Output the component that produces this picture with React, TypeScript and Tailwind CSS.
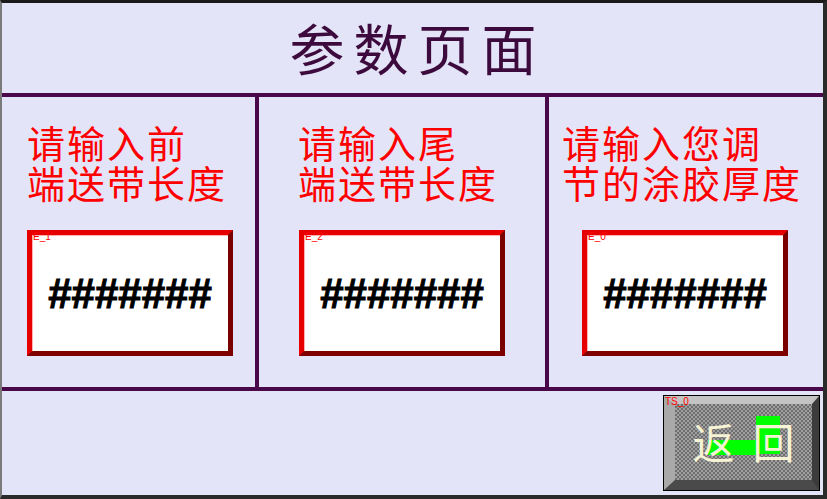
import React from "react";

const cjk = { fontFamily: '"Noto Sans CJK SC", "Noto Sans", sans-serif' };

function InputBox({ tag }: { tag: string }) {
  return (
    <div className="relative w-[206px] h-[126px] border-[5px] border-t-[#e60000] border-l-[#e60000] border-r-[#7a0000] border-b-[#800000] bg-white flex items-center justify-center shadow-[inset_1px_1px_0_#ffb0b0]">
      <span
        className="absolute left-[1px] top-[-3px] text-[10px] leading-none text-[#ff0000]"
        style={{ fontFamily: '"Liberation Sans", Arial, sans-serif' }}
      >
        {tag}
      </span>
      <span
        className="text-[42px] font-bold leading-none text-black mt-[2px] [-webkit-text-stroke:1px_black]"
        style={{ fontFamily: '"Liberation Sans", Arial, sans-serif' }}
      >
        #######
      </span>
    </div>
  );
}

function Label({ lines }: { lines: string[] }) {
  return (
    <div
      className="text-[38px] leading-[40px] tracking-[2px] text-[#ff0000] font-normal"
      style={cjk}
    >
      {lines.map((l) => (
        <div key={l} className="whitespace-nowrap">
          {l}
        </div>
      ))}
    </div>
  );
}

export default function App() {
  return (
    <div className="w-[827px] h-[499px] bg-[#e4e4f8] border-t-[3px] border-t-[#1a1a1a] border-l-[2px] border-l-[#7a7a7a] border-r-[4px] border-r-[#2a2a2a] border-b-[4px] border-b-[#2a2a2a] flex flex-col overflow-hidden">
      {/* header */}
      <div className="h-[90px] flex items-center justify-center">
        <span
          className="text-[55px] leading-none tracking-[9px] text-[#3c0a3c] font-normal ml-[10px] mb-[4px]"
          style={cjk}
        >
          参数页面
        </span>
      </div>
      <div className="h-[4px] bg-[#48084a]" />
      {/* middle */}
      <div className="h-[290px] flex">
        <div className="w-[253px] flex flex-col pl-[25px] pt-[25px]">
          <Label lines={["请输入前", "端送带长度"]} />
          <div className="mt-[28px]">
            <InputBox tag="E_1" />
          </div>
        </div>
        <div className="w-[4px] bg-[#48084a]" />
        <div className="w-[286px] flex flex-col pl-[40px] pt-[25px]">
          <div className="-ml-[1px]">
            <Label lines={["请输入尾", "端送带长度"]} />
          </div>
          <div className="mt-[28px]">
            <InputBox tag="E_2" />
          </div>
        </div>
        <div className="w-[4px] bg-[#48084a]" />
        <div className="flex-1 flex flex-col pl-[13px] pt-[25px]">
          <Label lines={["请输入您调", "节的涂胶厚度"]} />
          <div className="mt-[28px] pl-[20px]">
            <InputBox tag="E_0" />
          </div>
        </div>
      </div>
      <div className="h-[4px] bg-[#48084a]" />
      {/* bottom */}
      <div className="flex-1 flex items-center justify-end pr-[3px]">
        <div className="relative w-[157px] h-[96px] border border-black">
          <div className="w-full h-full border-t-[8px] border-t-[#c4c4c4] border-l-[11px] border-l-[#a9a9a9] border-r-[7px] border-r-[#3c3c3c] border-b-[10px] border-b-[#4a4a4a] bg-[#8c8c8c] bg-[repeating-conic-gradient(#6e6e6e_0%_25%,#a0a0a0_0%_50%)] bg-[length:4px_4px] relative">
            <div className="absolute left-[81px] top-[12px] w-[24px] h-[38px] bg-[#00ff00]" />
            <div className="absolute left-[33px] top-[36px] w-[50px] h-[15px] bg-[#00ff00]" />
            <div className="absolute inset-0 flex items-center justify-center gap-[18px] pb-[2px]">
              <span
                className="text-[42px] leading-none text-[#f6f2d4] font-normal"
                style={cjk}
              >
                返
              </span>
              <span
                className="text-[42px] leading-none text-[#f6f2d4] font-normal"
                style={cjk}
              >
                回
              </span>
            </div>
          </div>
          <span
            className="absolute left-[1px] top-[1px] text-[10px] leading-none text-[#ff0000]"
            style={{ fontFamily: '"Liberation Sans", Arial, sans-serif' }}
          >
            TS_0
          </span>
        </div>
      </div>
    </div>
  );
}
